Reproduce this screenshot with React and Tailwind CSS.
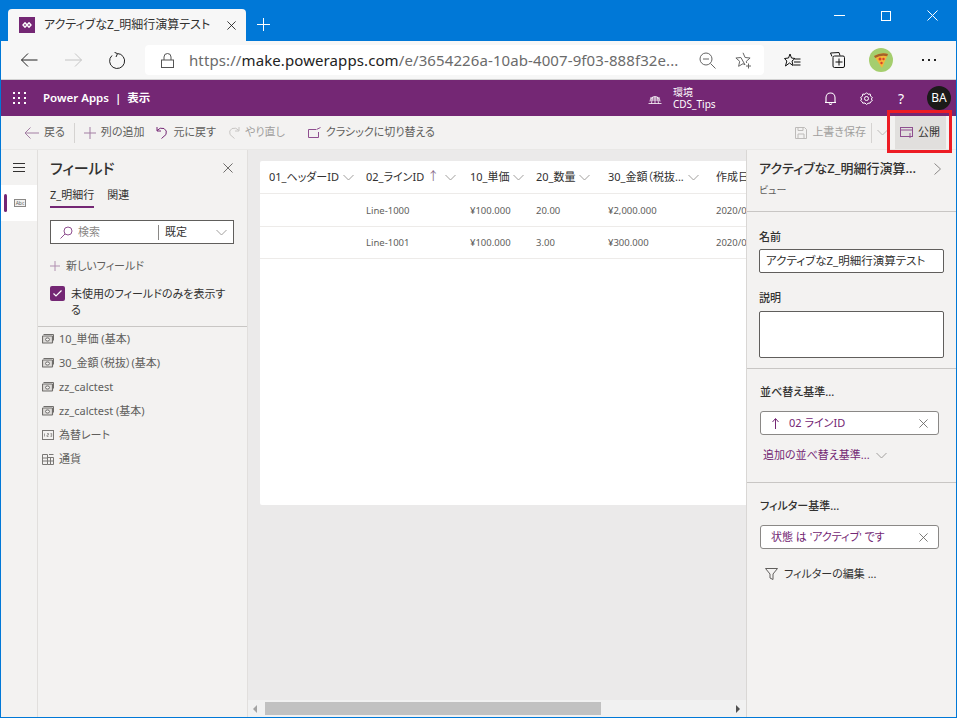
const I = ({ w = 16, h = 16, vb, c = "currentColor", sw = 1, children, className = "" }) => (
  <svg width={w} height={h} viewBox={vb || `0 0 ${w} ${h}`} fill="none" stroke={c} strokeWidth={sw} className={`shrink-0 ${className}`}>{children}</svg>
);
const Chevron = ({ c = "#a19f9d", w = 11 }) => (
  <I w={w} h={7} vb="0 0 11 7" c={c}><path d="M.5 1 5.5 6l5-5" /></I>
);
const X = ({ s = 11, c = "#605e5c" }) => (
  <I w={s} h={s} vb="0 0 11 11" c={c}><path d="M.5.5l10 10M10.5.5l-10 10" /></I>
);
const Money = () => (
  <I w={12} h={10} vb="0 0 12 10" c="#6f6d6b">
    <path d="M1.500.5h10v6" /><rect x=".5" y="2" width="10" height="7" rx=".5" fill="#dedcda" strokeWidth="1.200" />
    <ellipse cx="5.500" cy="5.500" rx="2" ry="1.600" fill="#f3f2f1" />
  </I>
);
const Num = () => (
  <svg width="12" height="10" viewBox="0 0 12 10" className="shrink-0">
    <rect x=".5" y=".5" width="11" height="9" fill="none" stroke="#7a7876" />
    <path d="M2.500 3.500v3M5 3.500h1.500v1.500H5v1.500h1.500M8.500 3.500h1.200v3H8.500M8.500 5h1.200" fill="none" stroke="#7a7876" strokeWidth=".7" />
  </svg>
);
const Curr = () => (
  <I w={12} h={11} vb="0 0 12 11" c="#7a7876">
    <path d="M.5.5h5v10h-5ZM5.500 3.500h6v7h-6M.5 4h5M.5 7h5M5.500 7h6M8.500 3.500v7M7 .5h4.500" />
  </I>
);
const Cmd = ({ icon, children, className = "", text = "text-[#605e5c]" }) => (
  <div className={`flex items-center gap-[5px] ${text} ${className}`}>{icon}<span className="whitespace-nowrap">{children}</span></div>
);
const Field = ({ icon, children }) => (
  <div className="h-6 flex items-center gap-[5px] pl-[4px] text-[11px] text-[#605e5c]">
    <span className="w-3 flex justify-center">{icon}</span><span className="whitespace-nowrap">{children}</span>
  </div>
);
const Head = ({ w, children, arrow }) => (
  <div style={{ width: w }} className="shrink-0 flex items-center gap-[4px] pl-[9px] text-[11px] text-[#323130] whitespace-nowrap">
    <span>{children}</span>
    {arrow && <span className="text-[#8a6d8a] text-[12px] -ml-[1px]">↑</span>}
    <span className={arrow ? "ml-[2px]" : ""}><Chevron /></span>
  </div>
);
const Cell = ({ w, children }) => (
  <div style={{ width: w }} className="shrink-0 pl-[9px] pt-[2px] text-[9.5px] text-[#605e5c] whitespace-nowrap">{children}</div>
);
const cols = [97, 104, 66, 72, 108, 100];

export default function App() {
  return (
    <div className="w-[957px] h-[718px] relative overflow-hidden bg-[#0078d7] p-[1px] pt-0 font-['Noto_Sans','Noto_Sans_CJK_JP',sans-serif] [font-feature-settings:'palt'] text-[#323130] flex flex-col">
      {/* title bar */}
      <div className="h-[41px] shrink-0 flex items-end pl-[7px] text-white">
        <div className="w-[238px] h-8 bg-[#f7f7f7] rounded-t-[4px] flex items-center pl-[11px] pr-[10px] text-[#323130]">
          <div className="w-4 h-4 bg-[#742774] flex items-center justify-center">
            <svg width="10" height="6" viewBox="0 0 10 6" fill="none" stroke="#fff" strokeWidth="1.400"><path d="M3 .8 5 3 3 5.200 1 3ZM7 .8 9 3 7 5.200 5 3Z" /></svg>
          </div>
          <span className="ml-[9px] text-[12px] whitespace-nowrap flex-1">アクティブなZ_明細行演算テスト</span>
          <X s={9} c="#111" />
        </div>
        <div className="ml-[11px] mb-[10px]">
          <I w={13} h={13} c="#fff"><path d="M6.500 0v13M0 6.500h13" /></I>
        </div>
        <div className="ml-auto self-start flex items-center mt-[10px] pr-[18px] gap-[36px]">
          <I w={11} h={11} c="#fff"><path d="M0 5.500h11" /></I>
          <I w={10} h={10} c="#fff"><rect x=".5" y=".5" width="9" height="9" /></I>
          <X s={11} c="#fff" />
        </div>
      </div>
      {/* browser toolbar */}
      <div className="h-[39px] shrink-0 bg-[#f7f7f7] border-b border-[#d2d2d2] flex items-center pl-[20px] pr-[20px]">
        <I w={17} h={14} c="#222"><path d="M.5 7h16M7 .5.5 7 7 13.500" /></I>
        <I w={17} h={14} c="#c4c4c4" className="ml-[27px]"><path d="M0 7h16.500M10 .5 16.500 7 10 13.500" /></I>
        <I w={17} h={17} c="#222" className="ml-[27px]"><path d="M8.500 1.500A7.500 7.500 0 1 1 3 3.500M5.500.3 8.500 1.700 7 5" /></I>
        <div className="ml-[19px] w-[619px] h-[30px] bg-white rounded-[4px] flex items-center pl-[16px] pr-[12px]">
          <I w={13} h={15} c="#555"><path d="M3 7V4a3.500 3.500 0 0 1 7 0v3" /><rect x=".5" y="7" width="12" height="7.500" /></I>
          <span className="ml-[15px] min-w-0 text-[15px] tracking-[0.1px] text-[#6b6b6b] whitespace-nowrap flex-1"><span>https://</span><span className="text-[#222]">make.powerapps.com</span><span>/e/3654226a-10ab-4007-9f03-888f32e...</span></span>
          <I w={17} h={17} c="#666"><circle cx="7" cy="7" r="6" /><path d="M4 7h6M11.500 11.500l5 5" /></I>
          <I w={17} h={17} c="#666" className="ml-[19px]"><path d="M8 .8l2.100 4.700 5 .5-3.800 3.300.4 1.700M10 12.800 8 11.700 3.600 14.300l1.100-5L.9 6l5-.5Z" /><path d="M13.500 11.500v5M11 14h5" /></I>
        </div>
        <I w={17} h={15} c="#111" className="ml-[20px]"><path d="M6 1 7.500 5 11 5.500 8 8 9 12.500 5.500 10 1.500 13l1.300-5L.5 5.500 4.500 5Z" /><path d="M11 6h5.500M10 9h6.500M9.500 12h7" /></I>
        <I w={15} h={16} c="#111" className="ml-[29px]"><path d="M2 4.500.5 1 9 .5l1 3" /><rect x="3" y="4" width="11.500" height="11.500" rx="1.500" /><path d="M9 6.500v7M5.500 10h7" /></I>
        <svg width="24" height="24" viewBox="0 0 24 24" className="ml-[24px] shrink-0">
          <circle cx="12" cy="12" r="12" fill="#a5ce6e" />
          <path d="M5 8q7-4 14-2L13 20Z" fill="#f4b63a" /><path d="M5 8q7-4 14-2l-.8 2.200q-6-1.500-12 1.800Z" fill="#a5622a" />
          <circle cx="11" cy="11" r="1.500" fill="#d8402b" /><circle cx="14.500" cy="11" r="1.200" fill="#d8402b" /><circle cx="12.500" cy="15" r="1.200" fill="#d8402b" />
        </svg>
        <div className="ml-auto flex gap-[4px]">
          <i className="w-[2px] h-[2px] bg-[#222]" /><i className="w-[2px] h-[2px] bg-[#222]" /><i className="w-[2px] h-[2px] bg-[#222]" />
        </div>
      </div>
      {/* app bar */}
      <div className="h-9 shrink-0 bg-[#742774] text-white flex items-center pl-[12px] pr-[5px]">
        <div className="grid grid-cols-3 gap-[3px] w-[13px]">
          {[...Array(9)].map((_, i) => <i key={i} className="w-[2px] h-[2px] bg-white" />)}
        </div>
        <span className="ml-[17px] text-[11.500px] font-semibold whitespace-pre">Power Apps  |  表示</span>
        <div className="ml-auto flex items-center">
          <I w={14} h={13} c="#fff"><path d="M2 9.500a5 5 0 1 1 10 0M.5 11.500h13M2.500 8h9M2 6h10M7 4.500v7M4.500 5l-1 6.500M9.500 5l1 6.500" strokeWidth=".8" /></I>
          <div className="ml-[11px] text-[10px] leading-[12px] w-[53px]"><div>環境</div><div>CDS_Tips</div></div>
          <I w={11} h={13} c="#fff" className="ml-[99px]"><path d="M1 10V5.500a4.500 4.500 0 0 1 9 0V10l1 .5H0ZM4 11.500q1.500 2 3 0" strokeWidth="1.100" /></I>
          <I w={13} h={13} c="#fff" className="ml-[24px]"><circle cx="6.500" cy="6.500" r="2" /><path d="M6.500.7 8 2.300l2.200-.3.400 2.200 1.800 1.300-1.100 1.500 1.100 1.500-1.800 1.300-.4 1.200-2.200.3-1.500 1.200L5 11l-2.200.2-.4-1.200L.6 8.500l1.100-1.500L.6 5.500l1.800-1.300L2.800 2 5 2.300Z" /></I>
          <span className="ml-[25px] text-[14px] w-[10px]">?</span>
          <div className="ml-[19px] w-6 h-6 rounded-full bg-[#1b1a19] text-[12px] flex items-center justify-center">BA</div>
        </div>
      </div>
      {/* command bar */}
      <div className="h-[34px] shrink-0 bg-[#f3f2f1] flex items-center pl-[23px] pr-[10px] text-[11px] border-b border-[#e9e8e6]">
        <Cmd icon={<I w={15} h={12} c="#a37fa3"><path d="M15 6H1M6.500.5 1 6l5.500 5.500" /></I>}>戻る</Cmd>
        <div className="w-[1px] h-5 bg-[#d5d3d1] ml-[9px]" />
        <Cmd className="ml-[9px]" icon={<I w={12} h={12} c="#a37fa3"><path d="M6 0v12M0 6h12" /></I>}>列の追加</Cmd>
        <Cmd className="ml-[12px]" icon={<I w={12} h={13} c="#742774"><path d="M1 1v4h4M1 4.500Q4 1 8 2.500q3.500 2 2 6L5.500 12.500" /></I>}>元に戻す</Cmd>
        <Cmd className="ml-[12px]" text="text-[#a19f9d]" icon={<I w={12} h={13} c="#c8c6c4"><path d="M11 1v4H7M11 4.500Q8 1 4 2.500q-3.500 2-2 6L6.500 12.500" /></I>}>やり直し</Cmd>
        <Cmd className="ml-[23px]" icon={<I w={13} h={11} c="#8f4f8f"><path d="M8 2.500H.5v8h10V5M8.500 2.500 12.500.5" /></I>}>クラシックに切り替える</Cmd>
        <div className="ml-auto flex items-center h-full">
          <Cmd text="text-[#a19f9d]" icon={<I w={12} h={12} c="#bdbbb9"><path d="M.5.5h9l2 2v9H.5ZM3 .5v3h5v-3M3 11.500V7h6v4.500" /></I>}>上書き保存</Cmd>
          <div className="w-[1px] h-5 bg-[#d5d3d1] ml-[5px]" />
          <span className="ml-[5px]"><Chevron c="#bdbbb9" /></span>
          <div className="ml-[7px] w-[51px] h-[33px] bg-[#e1dfdd] flex items-center pl-[5px] gap-[5px] text-[#323130]">
            <I w={13} h={11} c="#8f4f8f"><rect x=".5" y=".5" width="12" height="9" /><path d="M.5 3h12M10 6v5" /></I><span>公開</span>
          </div>
        </div>
      </div>
      {/* body */}
      <div className="flex-1 min-h-0 flex">
        {/* nav rail */}
        <div className="w-[37px] shrink-0 bg-[#f3f2f1] border-r border-[#e1dfdd] flex flex-col">
          <div className="h-[35px] flex items-center justify-center">
            <I w={12} h={9} c="#323130"><path d="M0 .5h12M0 4.500h12M0 8.500h12" /></I>
          </div>
          <div className="h-9 bg-white flex items-center relative pl-[13px]">
            <i className="absolute left-[3px] top-[9px] w-[3px] h-[18px] rounded-[2px] bg-[#742774]" />
            <div className="w-[12px] h-[8px] border border-[#8a8886] bg-[#f3f2f1] text-[5px] leading-[6px] text-center text-[#605e5c]">Abc</div>
          </div>
        </div>
        {/* fields panel */}
        <div className="w-[210px] shrink-0 bg-[#f3f2f1] border-r border-[#e1dfdd] flex flex-col">
          <div className="flex items-center justify-between pl-[12px] pr-[14px] h-[36px]">
            <span className="text-[15px] font-medium text-[#323130]">フィールド</span>
            <X s={10} c="#605e5c" />
          </div>
          <div className="flex pl-[12px] gap-[13px] text-[11px] h-[22px]">
            <span className="border-b-2 border-[#742774] h-[22px] pt-[1px]">Z_明細行</span>
            <span className="pt-[1px]">関連</span>
          </div>
          <div className="ml-[12px] w-[184px] mt-[12px] h-[24px] bg-white border border-[#605e5c] flex items-center text-[11px] text-[#605e5c] pl-[9px] pr-[6px]">
            <I w={13} h={13} c="#8f4f8f"><circle cx="8" cy="5" r="4" /><path d="M5 8 .5 12.500" /></I>
            <span className="ml-[5px] w-[80px] text-[#8a8886]">検索</span>
            <span className="w-[1px] h-[15px] bg-[#8a8886]" />
            <span className="ml-[6px] flex-1 text-[#323130]">既定</span>
            <Chevron />
          </div>
          <div className="ml-[12px] mt-[14px] flex items-center gap-[6px] text-[11px] text-[#605e5c] h-[16px]">
            <I w={10} h={10} c="#b08fb0"><path d="M5 0v10M0 5h10" /></I>新しいフィールド
          </div>
          <div className="ml-[12px] mt-[12px] flex gap-[6px] text-[11px] leading-[16px]">
            <div className="w-[15px] h-[15px] rounded-[2px] bg-[#742774] flex items-center justify-center shrink-0">
              <I w={9} h={7} c="#fff" sw={1.200}><path d="M.5 3.500 3 6 8.500.5" /></I>
            </div>
            <span className="text-[#323130] w-[160px]">未使用のフィールドのみを表示する</span>
          </div>
          <div className="mt-[8px] border-t border-[#c8c6c4]">
            <Field icon={<Money />}>10_単価 (基本)</Field>
            <Field icon={<Money />}>30_金額（税抜）(基本)</Field>
            <Field icon={<Money />}>zz_calctest</Field>
            <Field icon={<Money />}>zz_calctest (基本)</Field>
            <Field icon={<Num />}>為替レート</Field>
            <Field icon={<Curr />}>通貨</Field>
          </div>
        </div>
        {/* canvas */}
        <div className="flex-1 min-w-0 bg-[#ebeaea] flex flex-col">
          <div className="flex-1 min-h-0 overflow-hidden pl-[12px] pt-[11px]">
            <div className="w-[620px] h-[344px] bg-white rounded-[2px]">
              <div className="h-[33px] flex items-center border-b border-[#edebe9]">
                <Head w={cols[0]}>01_ヘッダーID</Head>
                <Head w={cols[1]} arrow>02_ラインID</Head>
                <Head w={cols[2]}>10_単価</Head>
                <Head w={cols[3]}>20_数量</Head>
                <Head w={cols[4]}>30_金額（税抜...</Head>
                <div style={{ width: cols[5] }} className="shrink-0 pl-[9px] text-[11px] whitespace-nowrap">作成日</div>
              </div>
              {[["Line-1000", "¥100.000", "20.00", "¥2,000.000"], ["Line-1001", "¥100.000", "3.00", "¥300.000"]].map((r) => (
                <div key={r[0]} className="h-[32.500px] flex items-center border-b border-[#edebe9]">
                  <Cell w={cols[0]} />
                  <Cell w={cols[1]}>{r[0]}</Cell>
                  <Cell w={cols[2]}>{r[1]}</Cell>
                  <Cell w={cols[3]}>{r[2]}</Cell>
                  <Cell w={cols[4]}>{r[3]}</Cell>
                  <Cell w={cols[5]}>2020/0</Cell>
                </div>
              ))}
            </div>
          </div>
          <div className="h-[17px] shrink-0 bg-[#f1f1f1] flex items-center pl-[5px] pr-[5px]">
            <svg width="5" height="8" viewBox="0 0 5 8" className="shrink-0"><path d="M4 0v8L0 4Z" fill="#a3a3a3" /></svg>
            <div className="ml-[7px] w-[336px] h-[13px] bg-[#c1c1c1]" />
            <svg width="5" height="8" viewBox="0 0 5 8" className="ml-auto shrink-0"><path d="M0 0v8l4-4Z" fill="#505050" /></svg>
          </div>
        </div>
        {/* properties */}
        <div className="w-[210px] shrink-0 bg-[#f3f2f1] border-l border-[#d9d7d5] flex flex-col text-[11px]">
          <div className="h-[62px] border-b border-[#c8c6c4] px-[12px] pt-[9px] relative">
            <div className="text-[13px] font-medium leading-[18px] whitespace-nowrap">アクティブなZ_明細行演算...</div>
            <div className="mt-[6px] text-[10px] text-[#605e5c]">ビュー</div>
            <span className="absolute right-[15px] top-[13px]"><I w={7} h={12} c="#8a8886"><path d="M.5.500 6.500 6 .5 11.500" /></I></span>
          </div>
          <div className="h-[157px] border-b border-[#c8c6c4] pl-[12px] pr-[12px] pt-[17px]">
            <div className="font-medium leading-[16px]">名前</div>
            <div className="mt-[4px] h-[24px] w-[185px] bg-white border border-[#605e5c] rounded-[2px] flex items-center pl-[6px] text-[11.500px] whitespace-nowrap">アクティブなZ_明細行演算テスト</div>
            <div className="mt-[17px] font-medium leading-[16px]">説明</div>
            <div className="mt-[5px] h-[47px] w-[185px] bg-white border border-[#605e5c] rounded-[2px]" />
          </div>
          <div className="h-[114px] border-b border-[#c8c6c4] pl-[13px] pt-[15px]">
            <div className="font-medium leading-[16px]">並べ替え基準...</div>
            <div className="mt-[11px] w-[179px] h-[24px] bg-white border border-[#8a8886] rounded-[3px] flex items-center pl-[11px] pr-[10px] text-[#742774]">
              <I w={7} h={11} c="#742774"><path d="M3.500 11V1M.5 4l3-3.500 3 3.500" /></I>
              <span className="ml-[10px] flex-1">02 ラインID</span>
              <X s={9} />
            </div>
            <div className="mt-[12px] ml-[3px] flex items-center gap-[6px] text-[#742774]">追加の並べ替え基準...<Chevron /></div>
          </div>
          <div className="flex-1 pl-[13px] pt-[15px]">
            <div className="font-medium leading-[16px]">フィルター基準...</div>
            <div className="mt-[11px] w-[179px] h-[24px] bg-white border border-[#8a8886] rounded-[3px] flex items-center pl-[10px] pr-[10px] text-[#742774]">
              <span className="flex-1 whitespace-nowrap">状態 は 'アクティブ' です</span>
              <X s={9} />
            </div>
            <div className="mt-[17px] ml-[5px] flex items-center gap-[6px] text-[#323130]">
              <I w={13} h={12} c="#605e5c"><path d="M.5.500h12L8 6v5.500L5 10V6Z" /></I>フィルターの編集 ...
            </div>
          </div>
        </div>
      </div>
      {/* annotation */}
      <div className="absolute left-[887px] top-[110px] w-[65px] h-[43px] border-[3px] border-[#ed1c24]" />
    </div>
  );
}
